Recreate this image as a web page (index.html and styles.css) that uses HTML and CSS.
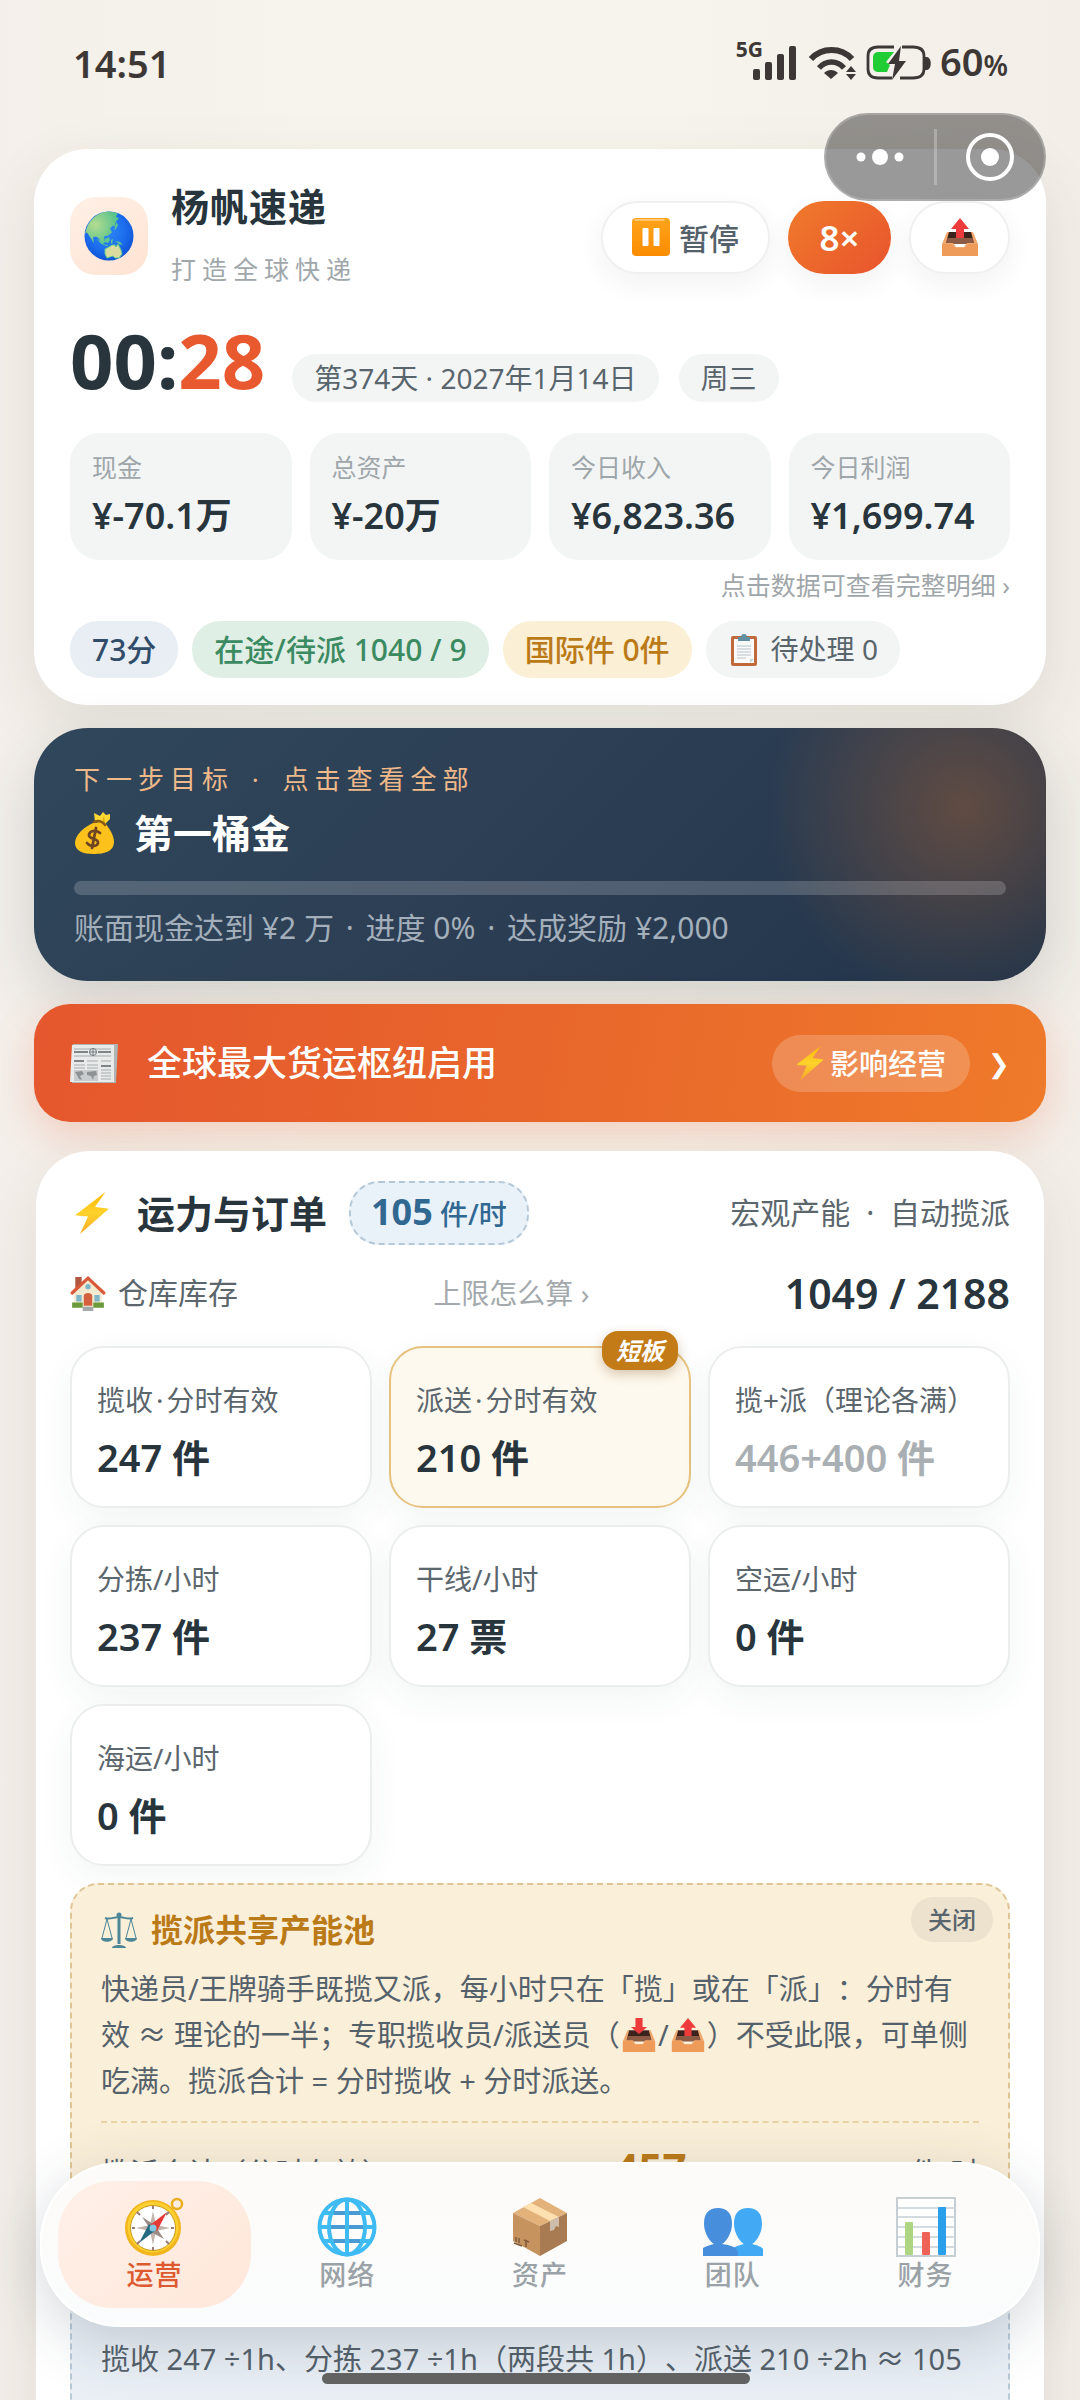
FILE: index.html
```html
<!DOCTYPE html>
<html lang="zh-CN">
<head>
<meta charset="utf-8">
<meta name="viewport" content="width=device-width, initial-scale=1">
<title>杨帆速递</title>
<link rel="stylesheet" href="styles.css">
</head>
<body>
<svg class="sprite" aria-hidden="true">
  <defs>
    <linearGradient id="g-amber" x1="0" y1="0" x2="0" y2="1"><stop offset="0" stop-color="#ffa41c"/><stop offset="1" stop-color="#fb8c00"/></linearGradient>
    <linearGradient id="g-bolt" x1="0" y1="0" x2="0" y2="1"><stop offset="0" stop-color="#feb804"/><stop offset=".5" stop-color="#fdd22c"/><stop offset="1" stop-color="#f9a825"/></linearGradient>
    <radialGradient id="g-sea" cx=".45" cy=".4" r=".65"><stop offset="0" stop-color="#2f8af5"/><stop offset=".6" stop-color="#1c6dee"/><stop offset="1" stop-color="#0b4fd0"/></radialGradient>
    <radialGradient id="g-land" cx=".3" cy=".4" r=".7"><stop offset="0" stop-color="#b5dc90"/><stop offset="1" stop-color="#4fc08c"/></radialGradient>
  </defs>
  <symbol id="i-earth" viewBox="0 0 50 50">
    <circle cx="25" cy="25" r="24.500" fill="url(#g-sea)"/>
    <path fill="url(#g-land)" d="M3 16C7 7 15 1 24 .600c4 0 8 1 10 2l-2 3 3 2-4 4 1 5-3-2-3 3 2 4-4 3-4 1 1 6-3 2-3-6-3-2-3 1 1 6-3-5-4-6-2 1z"/>
    <path fill="#62c78f" d="M13 27l4 4 2 2-3-1zM18 33l6 1v1l-5-1zM21 28l4-2 1 3-2 3-3-1zM27 29l2-1-1 5-1-1zM31 30l5 1 3 3-4-1zM31 9l3 5-2 4-2 1 2-5z"/>
    <path fill="#d9dc9e" stroke="#62c78f" stroke-width="1" d="M21 38l4-2 3-2 3 0 1 2 2-3 3 6 1 4-3 4-4 0-2-2-6 2-2-4z"/>
  </symbol>
  <symbol id="i-pause" viewBox="0 0 38 38">
    <rect width="38" height="38" rx="4" fill="url(#g-amber)"/><path d="M3 2h29" stroke="#ffd08a" stroke-width="1.500" stroke-linecap="round"/>
    <rect x="10.500" y="10" width="6" height="18" rx="1" fill="#fff"/><rect x="21.500" y="10" width="6" height="18" rx="1" fill="#fff"/>
  </symbol>
  <symbol id="i-tray" viewBox="0 0 38 38">
    <path fill="#5d3a30" d="M7 14h24l5 12H2z"/><path fill="#3b221c" d="M8 14h22l2 6H6z"/><path fill="#8d5a44" d="M7 20h24l2 6H5z"/>
    <path fill="#f0a76c" d="M1 26l5-12h2L5 25h7l3 4h8l3-4h7l-3-11h2l5 12v12H1z"/><path fill="#ee9a59" d="M1 26h10l3 4h10l3-4h10v12H1z"/>
  </symbol>
  <symbol id="i-outbox" viewBox="0 0 38 38">
    <use href="#i-tray"/><path fill="#ed3b3b" d="M19 0l9 11h-5v9h-8v-9h-5z"/>
  </symbol>
  <symbol id="i-inbox" viewBox="0 0 38 38">
    <use href="#i-tray"/><path fill="#ed3b3b" d="M19 18l9-8h-5V0h-8v10h-5z"/>
  </symbol>
  <symbol id="i-clip" viewBox="0 0 26 32">
    <rect y="2" width="26" height="30" rx="2" fill="#c0693a"/><path fill="#fafafa" d="M3 5h20v24H3z"/>
    <path stroke="#b8c2c8" d="M6 12h14M6 15h14M6 18h14M6 21h14M6 24h9"/><path fill="#c9d3d8" d="M19 29v-4h4z"/>
    <path fill="#5f8fa0" d="M7 3h3c0-4 6-4 6 0h3v4H7z"/>
  </symbol>
  <symbol id="i-bag" viewBox="0 0 42 44">
    <path fill="#fdd835" d="M21 11L20 2l6 3 3-4 3 3 4-1 0 5-5 5z"/><path fill="#e0a800" d="M30 5l-2 7 3 1z"/>
    <path fill="#fcc21b" d="M19 12h12c5 6 9 13 9 19 0 9-9 12-20 12S1 40 1 32c0-8 9-16 18-20z"/>
    <path fill="none" stroke="#8a5a14" stroke-width="2.500" stroke-linecap="round" d="M20 11c4-2 8-1 11 3"/>
    <path fill="none" stroke="#6d4424" stroke-width="2.800" stroke-linecap="round" d="M26 22c-4-4-11-2-11 2 0 5 10 3 9 8-1 4-8 4-11 0M22 17l-4 20"/>
  </symbol>
  <symbol id="i-news" viewBox="0 0 48 39">
    <path fill="#b0b4b5" d="M3 0h45l-2 39H2z"/><path fill="#e9ebeb" d="M2 1h42v37H0z"/>
    <path stroke="#7d8587" stroke-width="2" d="M4 8h14M28 8h13M4 17h10M31 22h10"/>
    <path stroke="#a4abad" d="M4 5h37M4 12h37M17 17h11M31 17h10M4 21h11M4 24h11M17 21h11M17 24h11M31 26h10M31 29h10M31 32h10M31 35h10"/>
    <circle cx="23" cy="8" r="3.500" fill="#e9ebeb" stroke="#6f777a"/><path stroke="#6f777a" d="M19.500 8h7M23 4.500v7"/>
    <path fill="#c9cccd" d="M4 26h24v11H4z"/><path fill="#8d9395" d="M5 28l7-1 2 3-4 2 2 4-3-1-2-4zM17 28l9-1 1 4-3 1-1 4-2-4-4-1z"/>
  </symbol>
  <symbol id="i-bolt" viewBox="0 0 34 44">
    <path fill="url(#g-bolt)" d="M30.500 1L1 23.500c-.5.500 0 1 .5 1l11.500 1L5 43l28-24.500c.5-.5 0-1-.5-1L20 16z"/>
  </symbol>
  <symbol id="i-house" viewBox="0 0 34 34">
    <path fill="#b0583e" d="M5 2h6v9l-6 5z"/><path fill="#f4ead0" d="M4 15L17 3l13 12v15H4z"/>
    <path fill="none" stroke="#d9593b" stroke-width="3" stroke-linecap="round" d="M2 17L17 3l15 14"/>
    <circle cx="17" cy="11" r="2.500" fill="#7db5c9"/><path fill="#7db5c9" d="M6 19h5v6H6zM23 19h5v6h-5z"/>
    <path fill="#d5603e" d="M13 29V20c0-4 8-4 8 0v9z"/><path fill="#6a9a3c" d="M2 26h10v5H2zM22 26h10v5H22z"/><path fill="#a3a9ab" d="M12 30h10v4H12z"/>
  </symbol>
  <symbol id="i-scale" viewBox="0 0 36 36">
    <g fill="none" stroke="#4d8797"><path stroke-width="2" d="M4 6c5 2 9-1 14-1s9 3 14 1"/><path stroke-width="1" d="M6 7L1 26M6 7l5 19M30 7l-5 19M30 7l5 19"/><path stroke-width="3" d="M18 2v30"/></g>
    <path fill="#4d8797" d="M0 26h12c0 5-12 5-12 0zM24 26h12c0 5-12 5-12 0zM11 36c0-4 14-4 14 0z"/><circle cx="18" cy="3" r="2.500" fill="#4d8797"/>
  </symbol>
  <symbol id="i-compass" viewBox="0 0 60 60">
    <circle cx="53" cy="7" r="5" fill="none" stroke="#e8ae1e" stroke-width="2.500"/><circle cx="29" cy="31" r="28" fill="#f2b51d"/><circle cx="29" cy="30" r="25.500" fill="#fdd02f"/><circle cx="29" cy="31" r="22.500" fill="#fff" stroke="#c79a1a"/>
    <path fill="#c3b3ad" d="M29 14l3 14 14 3-14 3-3 14-3-14-14-3 14-3z"/><path fill="#9b8b85" d="M18 20l13 8-4 5zM40 42l-13-7 5-5z"/>
    <path fill="#e53935" d="M43 15L33 34l-7-6z"/><path fill="#246a80" d="M15 46l10-19 7 6z"/><circle cx="29" cy="31" r="3.500" fill="#83c6e0"/>
    <path stroke="#9b7b78" stroke-width="2" d="M13 15l3 3M42 44l3 3M42 18l3-3M13 47l3-3M29 9v3M29 50v3M8 31h3M47 31h3"/>
  </symbol>
  <symbol id="i-globe" viewBox="0 0 60 60">
    <g fill="none" stroke="#3fbbf4" stroke-width="4"><circle cx="30" cy="30" r="27.500"/><ellipse cx="30" cy="30" rx="18" ry="27.500"/><path d="M30 2v56M2 30h56M6 16h48M6 44h48"/></g>
    <path stroke="#4a9bd4" stroke-width="4" d="M14 30h14M32 30h14M17 16h11M32 16h11M17 44h11M32 44h11"/>
  </symbol>
  <symbol id="i-box" viewBox="0 0 60 60">
    <path fill="#e3b17a" d="M30 1l27 15-27 13L3 16z"/><path fill="#c6935f" d="M3 16l27 13v30L3 44z"/><path fill="#a87b53" d="M57 16L30 29v30l27-15z"/>
    <path fill="#ffe0b0" d="M13 10l8-4 28 14-9 4z"/><path fill="#cdbdaa" d="M40 24l9-4v10l-3-1-2 4-4 1z"/><path fill="none" stroke="#7d5a3b" stroke-width="1.500" d="M6 40v5M9 41v5M4 46l8 3M14 43l5 2M16 44v6"/>
  </symbol>
  <symbol id="i-team" viewBox="0 0 60 50">
    <path fill="#42a9f5" d="M31 17C31 6 36 1 45 1s14 5 14 16c0 9-6 18-10 20 5 1 10 3 11 5v7H30v-8c3-2 7-3 11-4-4-2-10-11-10-20z"/>
    <path fill="#478fdd" d="M1 17C1 6 6 1 15 1s14 5 14 16c0 9-6 18-10 20 8 1 15 3 16 8v4H0v-8c3-2 7-3 11-4C7 35 1 26 1 17z"/>
  </symbol>
  <symbol id="i-chart" viewBox="0 0 60 60">
    <path fill="#fff" stroke="#c5ced3" stroke-width="2" d="M1 1h58v58H1z"/><path stroke="#c5d0d6" stroke-width="1.500" d="M1 11h58M1 20h58M1 30h58M1 40h58M1 50h58"/>
    <rect x="9" y="25" width="8" height="33" rx="1" fill="#aed581"/><rect x="26" y="35" width="8" height="23" rx="1" fill="#ef6257"/><rect x="42" y="10" width="8" height="48" rx="1" fill="#2ba0ea"/>
  </symbol>
</svg>

<div class="app">
  <header class="status">
    <span class="status-time">14:51</span>
    <span class="status-right">
      <span class="net">5G</span>
      <svg class="signals" viewBox="0 0 180 38" aria-hidden="true">
        <g fill="#3d3835">
          <rect x="2" y="25" width="7" height="11" rx="2"/><rect x="14" y="18" width="7" height="18" rx="2"/><rect x="26" y="10" width="7" height="26" rx="2"/><rect x="38" y="2" width="7" height="34" rx="2"/>
          <path d="M80 35l-7-6c4-4 10-4 14 0z"/><path d="M95 28l5-6 5 6zM95 30h10l-5 6z"/>
          <path d="M174 13h2c5 1 5 12 0 13h-2z"/>
        </g>
        <g fill="none" stroke="#3d3835" stroke-width="6"><path d="M60 15c11-12 30-12 41 0"/><path stroke-width="5.500" d="M68 24c7-8 18-8 25 0"/></g>
        <path fill="none" stroke="#3d3835" stroke-width="2.800" d="M143 3h-16c-7 0-10 3-10 9v13c0 6 3 9 10 9h14M151 3h11c7 0 11 3 11 9v13c0 6-4 9-11 9h-13"/>
        <path fill="#21cd35" d="M128 8h15l-8 10 4 3-3 7h-8c-4 0-6-2-6-5V13c0-3 2-5 6-5z"/>
        <path fill="#3d3835" d="M150 2l-13 18h7l-3 16 14-19h-7z"/>
      </svg>
      <span class="battery">60<small>%</small></span>
    </span>
  </header>

  <div class="capsule">
    <button class="cap-btn" aria-label="更多"><svg width="48" height="18" viewBox="0 0 48 18"><g fill="#fff"><circle cx="5" cy="9" r="4.500"/><circle cx="24" cy="9" r="8"/><circle cx="43" cy="9" r="4.500"/></g></svg></button>
    <button class="cap-btn cap-close" aria-label="关闭小程序"><svg width="50" height="50" viewBox="0 0 50 50"><circle cx="25" cy="25" r="22" fill="none" stroke="#fff" stroke-width="4"/><circle cx="25" cy="25" r="9" fill="#fff"/></svg></button>
  </div>

  <main class="feed">
    <section class="card summary">
      <div class="brand">
        <div class="logo"><svg width="50" height="50"><use href="#i-earth"/></svg></div>
        <div class="brand-text"><h1>杨帆速递</h1><p>打造全球快递</p></div>
        <div class="actions">
          <button class="pill-btn"><svg width="38" height="38"><use href="#i-pause"/></svg>暂停</button>
          <button class="pill-btn speed">8×</button>
          <button class="pill-btn export" aria-label="导出"><svg width="38" height="38"><use href="#i-outbox"/></svg></button>
        </div>
      </div>
      <div class="clock">
        <strong>00:<em>28</em></strong><span class="chip">第374天 · 2027年1月14日</span><span class="chip">周三</span>
      </div>
      <div class="stats">
        <div class="stat"><span>现金</span><b>¥-70.1万</b></div>
        <div class="stat"><span>总资产</span><b>¥-20万</b></div>
        <div class="stat"><span>今日收入</span><b>¥6,823.36</b></div>
        <div class="stat"><span>今日利润</span><b>¥1,699.74</b></div>
      </div>
      <a class="more" href="#detail">点击数据可查看完整明细 ›</a>
      <div class="tags">
        <span class="tag blue">73分</span><span class="tag green">在途/待派 1040 / 9</span><span class="tag amber">国际件 0件</span><span class="tag todo"><svg width="26" height="32"><use href="#i-clip"/></svg>待处理 0</span>
      </div>
    </section>

    <section class="goal">
      <p class="goal-hint">下一步目标<i class="dot"> · </i>点击查看全部</p>
      <h2><svg width="42" height="44"><use href="#i-bag"/></svg>第一桶金</h2>
      <div class="bar" role="progressbar" aria-label="进度" aria-valuenow="0"></div>
      <p class="goal-note">账面现金达到 ¥2 万<i class="dot"> · </i>进度 0%<i class="dot"> · </i>达成奖励 ¥2,000</p>
    </section>

    <a class="news" href="#news">
      <svg width="48" height="39"><use href="#i-news"/></svg>
      <span class="news-title">全球最大货运枢纽启用</span>
      <span class="news-tag"><svg width="28" height="36"><use href="#i-bolt"/></svg>影响经营</span>
      <span class="news-go">❯</span>
    </a>

    <section class="card capacity">
      <div class="cap-head">
        <svg width="34" height="44"><use href="#i-bolt"/></svg>
        <h2>运力与订单</h2>
        <span class="rate"><b>105</b> 件/时</span>
        <span class="cap-sub">宏观产能<i class="dot wide"> · </i>自动揽派</span>
      </div>
      <div class="stock">
        <span class="stock-name"><svg width="36" height="36"><use href="#i-house"/></svg>仓库库存</span>
        <a class="stock-help" href="#limit">上限怎么算 ›</a>
        <b>1049 / 2188</b>
      </div>
      <div class="grid">
        <div class="cell"><span>揽收<i class="dot tight">·</i>分时有效</span><b>247 件</b></div>
        <div class="cell short"><span>派送<i class="dot tight">·</i>分时有效</span><b>210 件</b><em class="badge">短板</em></div>
        <div class="cell muted"><span>揽+派（理论各满）</span><b>446+400 件</b></div>
        <div class="cell"><span>分拣/小时</span><b>237 件</b></div>
        <div class="cell"><span>干线/小时</span><b>27 票</b></div>
        <div class="cell"><span>空运/小时</span><b>0 件</b></div>
        <div class="cell"><span>海运/小时</span><b>0 件</b></div>
      </div>
      <div class="pool">
        <button class="close">关闭</button>
        <h3><svg width="36" height="36"><use href="#i-scale"/></svg>揽派共享产能池</h3>
        <p>快递员/王牌骑手既揽又派，每小时只在「揽」或在「派」：分时有效 ≈ 理论的一半；专职揽收员/派送员（<svg width="34" height="34"><use href="#i-inbox"/></svg>/<svg width="34" height="34"><use href="#i-outbox"/></svg>）不受此限，可单侧吃满。揽派合计 = 分时揽收 + 分时派送。</p>
        <div class="pool-sum"><span>揽派合计（分时有效）</span><b>457</b><span>件/时</span></div>
      </div>
      <div class="calc"><p>揽收 247 ÷1h、分拣 237 ÷1h（两段共 1h）、派送 210 ÷2h ≈ 105</p></div>
    </section>
  </main>

  <nav class="tabs">
    <a class="tab on" href="#ops"><svg width="60" height="60"><use href="#i-compass"/></svg>运营</a>
    <a class="tab" href="#net"><svg width="60" height="60"><use href="#i-globe"/></svg>网络</a>
    <a class="tab" href="#assets"><svg width="60" height="60"><use href="#i-box"/></svg>资产</a>
    <a class="tab" href="#team"><svg width="60" height="50"><use href="#i-team"/></svg>团队</a>
    <a class="tab" href="#money"><svg width="60" height="60"><use href="#i-chart"/></svg>财务</a>
  </nav>
  <div class="home-bar"></div>
</div>
</body>
</html>
```
FILE: styles.css
```css
* { box-sizing: border-box; }
body, h1, h2, h3, p { margin: 0; }
body {
  font-family: "Noto Sans", "Noto Sans CJK SC", sans-serif;
  color: #28353d;
  background: #f3efe9;
  text-spacing-trim: space-all;
}
h1, h2, h3 { font-weight: 700; }
button { font: inherit; color: inherit; border: 0; padding: 0; cursor: pointer; }
a { color: inherit; text-decoration: none; }
em { font-style: normal; }
svg { display: block; flex: none; }
.sprite { position: absolute; width: 0; height: 0; }
.dot { margin: 0 5px; font-style: normal; }
.dot.tight { margin: 0 3px; }
.dot.wide { margin: 0 8px; }

.app {
  position: relative;
  height: 100vh;
  overflow: hidden;
  background: linear-gradient(90deg, #f4efea, #f6f4ec 30%, #f6f4ec 60%, #f3eee8);
}

/* system status bar */
.status {
  display: flex;
  justify-content: space-between;
  align-items: center;
  height: 128px;
  padding: 0 72px 2px 73px;
  color: #3d3835;
  font-weight: 600;
}
.status-time { font-size: 38px; line-height: 40px; }
.status-right { display: flex; align-items: center; }
.net { font-size: 21px; line-height: 20px; margin: 0 -12px 28px 0; font-weight: 700; }
.signals { width: 180px; height: 38px; }
.battery { font-size: 38px; line-height: 40px; margin-left: 9px; font-weight: 600; }
.battery small { font-size: 28px; }

.capsule {
  position: absolute;
  z-index: 3;
  top: 113px;
  right: 34px;
  display: flex;
  align-items: center;
  width: 222px;
  height: 88px;
  border-radius: 44px;
  border: 2px solid rgba(255, 255, 255, .18);
  background: rgba(0, 0, 0, .4);
}
.cap-btn { flex: 1; display: grid; place-items: center; height: 56px; background: none; }
.cap-close { border-left: 3px solid rgba(255, 255, 255, .25); }

.feed { display: flex; flex-direction: column; padding: 21px 34px 0; }

.card {
  border-radius: 54px;
  background: #fff;
  box-shadow: 0 20px 60px rgba(60, 60, 40, .1);
}

/* company summary */
.summary { padding: 30px 36px 27px; }
.brand { display: flex; align-items: center; }
.logo {
  display: grid;
  place-items: center;
  width: 78px;
  height: 78px;
  margin-top: 6px;
  border-radius: 26px;
  background: linear-gradient(145deg, #fff0e6, #fee3d3);
}
.brand-text { margin-left: 23px; }
.brand-text h1 { font-size: 38px; line-height: 54px; letter-spacing: 1px; }
.brand-text p { margin-top: 18px; font-size: 25px; line-height: 36px; letter-spacing: 6px; color: #a0a7ab; }
.actions { display: flex; gap: 18px; margin: 8px 0 0 auto; }
.pill-btn {
  display: flex;
  align-items: center;
  justify-content: center;
  gap: 9px;
  height: 73px;
  padding: 0 29px;
  border: 2px solid #f0f0f0;
  border-radius: 37px;
  background: #fff;
  box-shadow: 0 10px 28px rgba(30, 40, 50, .06);
  font-size: 30px;
  font-weight: 500;
  color: #55616a;
}
.speed { width: 103px; border: 0; color: #fff; font-size: 35px; font-weight: 600; background: linear-gradient(135deg, #f07b2b, #e8532d); }
.export { width: 101px; }

.clock { display: flex; align-items: baseline; margin-top: 28px; }
.clock strong { font-size: 76px; line-height: 90px; font-weight: 700; }
.clock em { color: #e8592f; }
.chip { margin-left: 20px; padding: 0 22px; border-radius: 24px; background: #f3f5f5; font-size: 28px; line-height: 48px; color: #59656c; }
.clock strong + .chip { margin-left: 27px; }

.stats { display: grid; grid-template-columns: repeat(4, 1fr); gap: 18px; margin-top: 28px; }
.stat { display: flex; flex-direction: column; padding: 16px 0 19px 22px; border-radius: 30px; background: #f3f5f5; }
.stat span { font-size: 25px; line-height: 36px; color: #9fa6aa; }
.stat b { margin-top: 6px; font-size: 36px; line-height: 50px; font-weight: 600; }
.more { display: block; margin-top: 7px; text-align: right; font-size: 25px; line-height: 36px; color: #9fa6aa; }
.tags { display: flex; gap: 14px; margin-top: 18px; }
.tag { display: flex; align-items: center; gap: 14px; padding: 0 22px; border-radius: 28px; background: #f3f4f4; font-size: 30px; line-height: 57px; color: #59656c; font-weight: 500; }
.tag.todo { padding-left: 25px; font-size: 28px; font-weight: 400; }
.tag.blue { background: #e8eef4; color: #304c69; }
.tag.green { background: #e0efe5; color: #3c8a61; }
.tag.amber { background: #fbefd6; color: #bb7a18; }

/* next goal */
.goal {
  margin-top: 23px;
  padding: 30px 40px 32px;
  border-radius: 54px;
  color: #fff;
  background:
    radial-gradient(circle 200px at 930px 80px, rgba(232, 120, 40, .3), transparent),
    linear-gradient(135deg, #30475b, #2c3e54 50%, #21344a);
  box-shadow: 0 20px 60px rgba(40, 55, 65, .18);
}
.goal-hint { font-size: 26px; line-height: 42px; letter-spacing: 6px; color: #efb98a; }
.goal h2 { display: flex; align-items: center; gap: 18px; margin-top: 6px; font-size: 39px; line-height: 54px; }
.bar { height: 14px; margin-top: 21px; border-radius: 7px; background: rgba(255, 255, 255, .18); }
.goal-note { margin-top: 12px; font-size: 30px; line-height: 42px; color: #a3afba; }
.goal-note .dot { margin: 0 4px; }

/* news banner */
.news {
  display: flex;
  align-items: center;
  margin-top: 23px;
  padding: 30px 36px;
  border-radius: 36px;
  color: #fff;
  background: linear-gradient(100deg, #e5572e, #e8662b 50%, #ef7a2a);
  box-shadow: 0 14px 40px rgba(235, 100, 60, .25);
}
.news-title { margin: 0 auto 0 29px; font-size: 35px; line-height: 58px; font-weight: 500; }
.news-tag { display: flex; align-items: center; gap: 6px; padding: 0 24px; border-radius: 29px; background: rgba(255, 255, 255, .2); font-size: 29px; line-height: 57px; font-weight: 500; }
.news-go { margin-left: 18px; font-size: 26px; line-height: 58px; }

/* capacity */
.capacity { margin: 29px 2px 0; padding: 30px 34px 100px; }
.cap-head { display: flex; align-items: center; }
.cap-head svg { margin-left: 5px; }
.cap-head h2 { margin-left: 28px; font-size: 38px; line-height: 54px; }
.rate { margin-left: 22px; padding: 0 20px; border: 2px dashed #b5c8d8; border-radius: 30px; background: #eaf2f9; color: #316892; font-size: 28px; line-height: 58px; font-weight: 500; }
.rate b { font-size: 36px; font-weight: 700; }
.cap-sub { margin-left: auto; font-size: 30px; line-height: 44px; color: #5b666d; }
.stock { display: flex; justify-content: space-between; align-items: center; margin-top: 18px; color: #5b666d; font-size: 30px; line-height: 60px; }
.stock-name { display: flex; align-items: center; gap: 12px; }
.stock-help { font-size: 28px; color: #a3a9ac; }
.stock b { font-size: 41px; font-weight: 600; color: #28353d; }
.grid { display: grid; grid-template-columns: repeat(3, 1fr); gap: 17px; margin-top: 23px; }
.cell {
  position: relative;
  display: flex;
  flex-direction: column;
  gap: 10px;
  padding: 31px 0 23px 25px;
  border: 2px solid #eceeee;
  border-radius: 34px;
  background: #fff;
  box-shadow: 0 12px 34px rgba(50, 80, 80, .06);
}
.cell span { font-size: 28px; line-height: 42px; color: #5b666d; white-space: nowrap; }
.cell b { font-size: 38px; line-height: 52px; font-weight: 600; }
.cell.muted b { color: #a9afb2; }
.cell.short { border-color: #e6c27f; background: #fef9ee; }
.badge {
  position: absolute;
  top: -17px;
  right: 11px;
  padding: 0 14px;
  border-radius: 16px;
  background: #c27b17;
  box-shadow: 0 4px 12px rgba(120, 80, 20, .3);
  color: #fff;
  font-size: 24px;
  font-style: italic;
  font-weight: 700;
  line-height: 39px;
}

.pool {
  position: relative;
  margin-top: 17px;
  padding: 22px 29px 22px;
  border: 2px dashed #dfc594;
  border-radius: 28px;
  background: #faefd9;
}
.close { position: absolute; top: 12px; right: 15px; padding: 0 17px; border-radius: 23px; background: #ece2ce; color: #59656c; font-size: 24px; line-height: 45px; font-weight: 500; }
.pool h3 { display: flex; align-items: center; gap: 14px; font-size: 32px; line-height: 46px; color: #bb7a18; }
.pool p { margin-top: 13px; font-size: 29px; line-height: 46px; color: #55616a; }
.pool p svg { display: inline-block; margin: 0 2px; vertical-align: -6px; }
.pool-sum { display: flex; justify-content: space-between; align-items: baseline; margin-top: 17px; padding-top: 14px; border-top: 2px dashed #ecd3a3; font-size: 29px; line-height: 62px; color: #55616a; }
.pool-sum b { font-size: 42px; color: #bb7a18; }
.calc { margin-top: 16px; padding: 90px 29px 60px; border: 2px dashed #b8c9d8; border-radius: 28px; background: #e9eff5; font-size: 29px; line-height: 46px; color: #55616a; white-space: nowrap; }

/* bottom tabs */
.tabs {
  position: absolute;
  z-index: 2;
  left: 40px;
  right: 40px;
  bottom: 73px;
  display: flex;
  padding: 17px 16px;
  border: 2px solid #fff;
  border-radius: 80px;
  background: linear-gradient(180deg, #fdfbf8, #fafcfd);
  box-shadow: 0 16px 60px rgba(40, 55, 70, .2);
}
.tab { flex: 1; display: flex; flex-direction: column; align-items: center; justify-content: flex-end; height: 127px; padding-bottom: 15px; border-radius: 54px; font-size: 27px; line-height: 36px; letter-spacing: 1px; font-weight: 500; color: #9aa2a7; }
.tab.on { color: #dd5a31; background: linear-gradient(135deg, #fff0e8, #ffe7da); }
.home-bar { position: absolute; z-index: 4; bottom: 16px; left: 50%; width: 428px; height: 11px; margin-left: -218px; border-radius: 6px; background: #626262; }
```
